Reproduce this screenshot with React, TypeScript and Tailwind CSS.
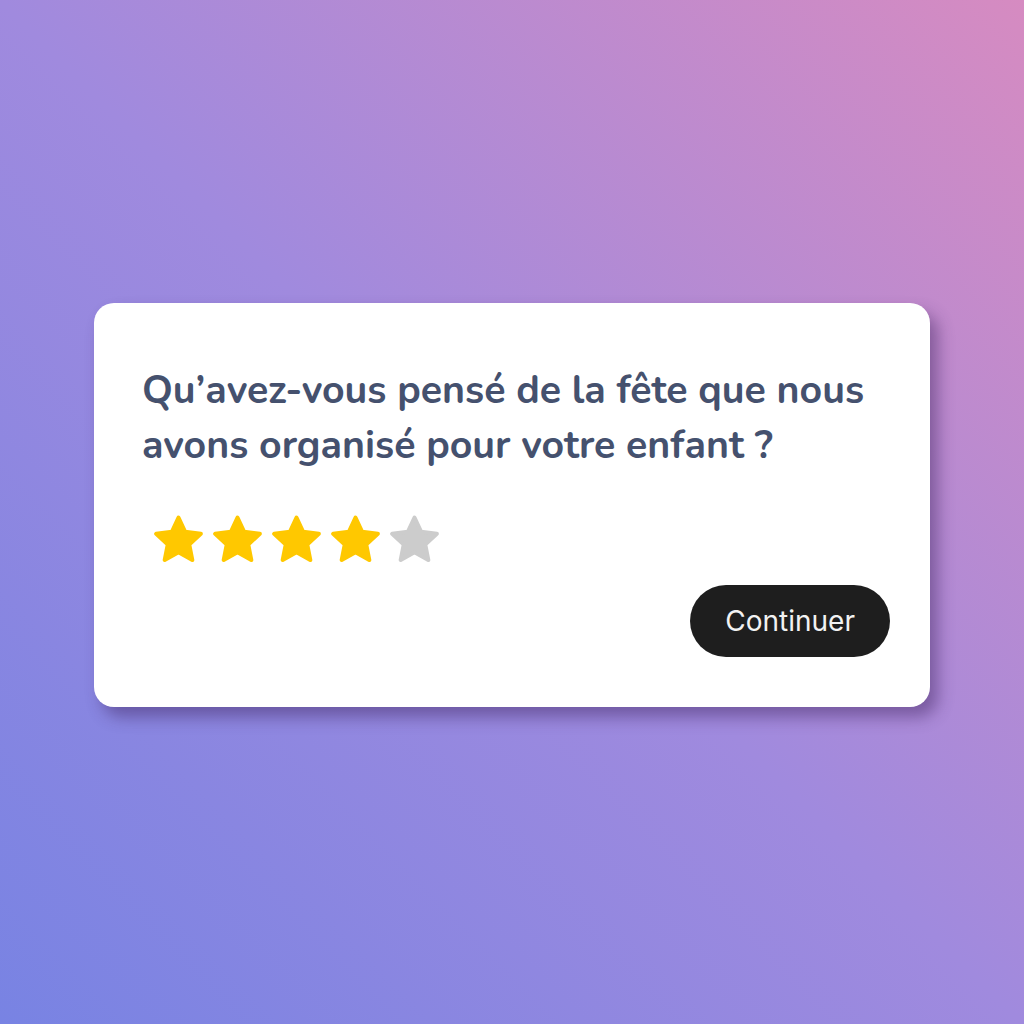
import React from "react";

// Points of a five-pointed star centred on (cx, cy).
function starPoints(cx: number, cy: number, R: number, r: number): string {
  const pts: string[] = [];
  for (let k = 0; k < 10; k++) {
    const rad = k % 2 === 0 ? R : r;
    const a = ((-90 + k * 36) * Math.PI) / 180;
    pts.push(`${(cx + rad * Math.cos(a)).toFixed(2)},${(cy + rad * Math.sin(a)).toFixed(2)}`);
  }
  return pts.join(" ");
}

function Star({ filled }: { filled: boolean }) {
  const color = filled ? "#ffc800" : "#cccccc";
  return (
    <svg width="59" height="48" viewBox="0 0 59 48" aria-hidden="true">
      <polygon
        points={starPoints(29.5, 26, 23.5, 11.3)}
        fill={color}
        stroke={color}
        strokeWidth="4"
        strokeLinejoin="round"
      />
    </svg>
  );
}

export default function App() {
  const rating = 4;
  return (
    <div className="w-[1024px] h-[1024px] flex items-center justify-center pb-[14px] bg-[linear-gradient(to_top_right,#7883e3_0%,#a08ade_50%,#d68bc1_100%)]">
      <div className="w-[836px] h-[404px] bg-white rounded-[20px] shadow-[8px_10px_16px_rgba(60,30,90,0.45)] pl-[48px] pr-[40px] pt-[60px] flex flex-col">
        <h1 className="font-['Nunito','Lato',sans-serif] font-bold text-[39.3px] leading-[55px] text-[#45516e]">
          Qu’avez-vous pensé de la fête que nous
          <br />
          avons organisé pour votre enfant ?
        </h1>
        <div className="flex mt-[42px] ml-[7px]">
          {[1, 2, 3, 4, 5].map((i) => (
            <Star key={i} filled={i <= rating} />
          ))}
        </div>
        <div className="flex justify-end mt-[22px]">
          <button className="h-[72px] px-[35px] rounded-full bg-[#1e1e1e] text-[#f2f2f2] font-['Inter','Liberation_Sans',sans-serif] text-[28px] leading-none">
            Continuer
          </button>
        </div>
      </div>
    </div>
  );
}
